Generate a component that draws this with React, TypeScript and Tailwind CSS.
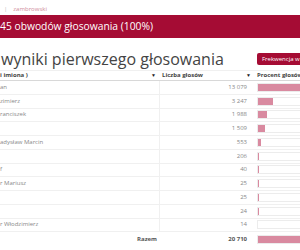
import React from "react";

type Row = {
  name: string;
  votes: string;
  pct: number;
};

const rows: Row[] = [
  { name: "an", votes: "13 079", pct: 63.15 },
  { name: "zimierz", votes: "3 247", pct: 15.68 },
  { name: "ranciszek", votes: "1 988", pct: 9.6 },
  { name: "", votes: "1 509", pct: 7.29 },
  { name: "adysław Marcin", votes: "553", pct: 2.67 },
  { name: "", votes: "206", pct: 0.99 },
  { name: "f", votes: "40", pct: 0.19 },
  { name: "r Mariusz", votes: "25", pct: 0.12 },
  { name: "", votes: "25", pct: 0.12 },
  { name: "", votes: "24", pct: 0.12 },
  { name: "r Włodzimierz", votes: "14", pct: 0.07 },
];

function Caret() {
  return <span className="absolute right-[4px] top-[2px] text-[5px] leading-[5px] text-[#222]">▼</span>;
}

function Bar({ pct }: { pct: number }) {
  return (
    <div className="h-[9px] w-[96px] border border-[#ececec] bg-white">
      <div className="h-full bg-[#d98aa0]" style={{ width: `${pct}%` }} />
    </div>
  );
}

export default function App() {
  return (
    <div className="w-[300px] h-[250px] overflow-hidden bg-white font-['Open_Sans',sans-serif]">
      {/* breadcrumb */}
      <div className="h-[15px] pt-[6px] pl-[4px] flex gap-[6px] text-[6px] leading-[7px] whitespace-nowrap">
        <span className="text-[#bbb]">|</span>
        <span className="text-[#cf8a9b]">zambrowski</span>
      </div>

      {/* banner */}
      <div className="h-[23px] bg-[#a50c34] text-white text-[10.3px] flex items-center whitespace-nowrap">
        45 obwodów głosowania (100%)
      </div>

      {/* title */}
      <div className="w-[360px] flex items-center justify-between mt-[14px] h-[14px]">
        <h2 className="pl-[1px] text-[16px] leading-[16px] text-[#444] whitespace-nowrap">
          wyniki pierwszego głosowania
        </h2>
        <button className="w-[103px] h-[12px] rounded-[2px] bg-[#a50c34] text-white text-[6px] leading-[12px] pl-[5px] text-left whitespace-nowrap">
          Frekwencja w pierwszej turze
        </button>
      </div>

      {/* table */}
      <div className="mt-[4px] w-[360px] text-[6px] text-[#888]">
        <div className="flex h-[11px] items-center border-t border-b border-t-[#f0f0f0] border-b-[#d8d8d8] font-bold text-[#444]">
          <div className="relative w-[160px] h-full flex items-center">
            i imiona )
            <Caret />
          </div>
          <div className="relative w-[95px] h-full flex items-center pl-[2px]">
            Liczba głosów
            <Caret />
          </div>
          <div className="flex-1 h-full flex items-center pl-[2px]">Procent głosów</div>
        </div>

        {rows.map((r, i) => (
          <div key={i} className="flex h-[13.75px] items-center border-b border-[#f0f0f0]">
            <div className="w-[160px] h-full flex items-center whitespace-nowrap border-r border-[#f0f0f0]">
              {r.name}
            </div>
            <div className="w-[95px] h-full flex items-center justify-end pr-[8px]">{r.votes}</div>
            <div className="flex-1 h-full flex items-center pl-[2px]">
              <Bar pct={r.pct} />
            </div>
          </div>
        ))}

        <div className="flex h-[13.75px] items-center font-bold text-[#555]">
          <div className="w-[160px] h-full flex items-center justify-end pr-[3px]">Razem</div>
          <div className="w-[95px] h-full flex items-center justify-end pr-[8px]">20 710</div>
          <div className="flex-1 h-full flex items-center pl-[2px]">
            <Bar pct={100} />
          </div>
        </div>
      </div>
    </div>
  );
}
